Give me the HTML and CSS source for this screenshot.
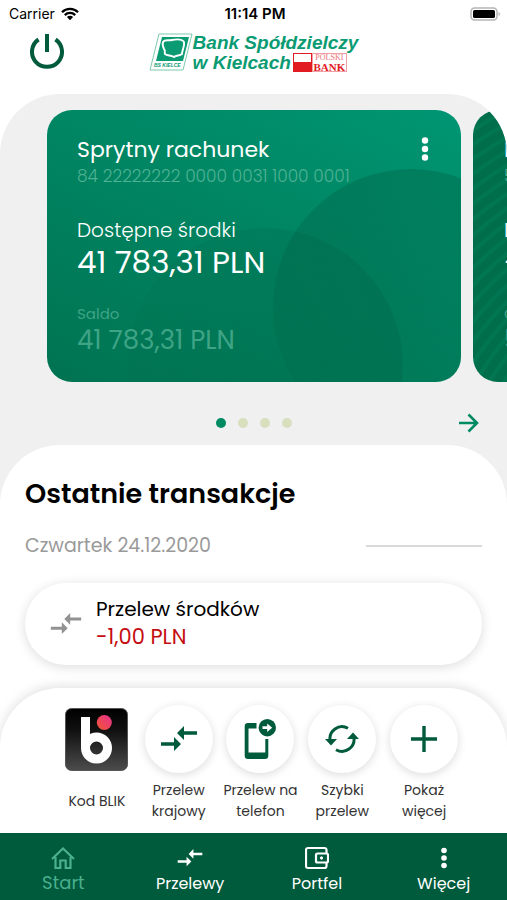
FILE: index.html
```html
<!DOCTYPE html>
<html lang="pl">
<head>
<meta charset="utf-8">
<meta name="viewport" content="width=device-width, initial-scale=1">
<title>Bank Spółdzielczy w Kielcach</title>
<link rel="stylesheet" href="styles.css">
</head>
<body>
<svg class="defs" aria-hidden="true">
  <symbol id="transfer" viewBox="0 0 38 26">
    <path d="M1 18h16M21 7h16" fill="none" stroke="currentColor" stroke-width="3.6"/>
    <path d="M14 11l7 7-7 7zM24 0l-7 7 7 7z" fill="currentColor"/>
  </symbol>
</svg>

<div class="status">
  <span class="carrier">Carrier
    <svg width="18" height="14" viewBox="0 0 18 14" aria-hidden="true">
      <path d="M1 5.2a11.4 11.4 0 0 1 16 0M3.8 8.1a7.4 7.4 0 0 1 10.4 0" fill="none" stroke="#000" stroke-width="2.3"/>
      <path d="M9 13.2L5.9 10.1a4.4 4.4 0 0 1 6.2 0z"/>
    </svg>
  </span>
  <span class="time">11:14 PM</span>
  <svg class="battery" width="31" height="14" viewBox="0 0 31 14" aria-hidden="true">
    <rect x="1" y="1" width="26" height="12" rx="3.5" fill="#fff" stroke="#b5b5b5" stroke-width="1.5"/>
    <rect x="3" y="3" width="22" height="8" rx="1.5"/>
    <path d="M28.5 5c2 .8 2 3.200 0 4z" fill="#b5b5b5"/>
  </svg>
</div>

<header class="header">
  <button class="power" aria-label="Wyloguj">
    <svg width="34" height="36" viewBox="0 0 34 36"><path d="M17 1v18M8.500 6.500a15 15 0 1 0 17 0" fill="none" stroke="currentColor" stroke-width="4"/></svg>
  </button>
  <div class="logo">
    <svg width="44" height="38" viewBox="0 0 44 38" aria-hidden="true">
      <path d="M10 1h33l-9 36H1z" fill="#fff" stroke="#7cc9b0"/>
      <path d="M13 4h27l-6 24H7z" fill="#0a9b73"/>
      <path d="M14 9c2-3 6-1 9-2 5-1 10-1 12 2 1 4-2 8-2 12-2 2-6 1-8 3-3-2-7-1-9-3-1-2 1-3-1-5-1-2-2-4-1-7z" fill="#0a9b73" stroke="#fff" stroke-width="1.900"/>
      <text x="5" y="34" class="logo-tag">BS KIELCE</text>
    </svg>
    <div class="logo-name">
      <div>Bank Spółdzielczy</div>
      <div class="logo-line"><span>w Kielcach</span>
        <span class="flag"></span><span class="polski"><span class="polski-top">POLSKI</span><span>BANK</span></span>
      </div>
    </div>
  </div>
</header>

<main class="main">
  <section class="accounts">
    <div class="carousel">
      <article class="card">
        <div class="card-head">
          <h2 class="card-title">Sprytny rachunek</h2>
          <button class="more" aria-label="Opcje rachunku">
            <svg width="8" height="24" viewBox="0 0 8 24" fill="currentColor"><circle cx="4" cy="3.500" r="3.200"/><circle cx="4" cy="12" r="3.200"/><circle cx="4" cy="20.500" r="3.200"/></svg>
          </button>
        </div>
        <p class="card-number">84 22222222 0000 0031 1000 0001</p>
        <p class="card-label">Dostępne środki</p>
        <p class="card-amount">41 783,31 PLN</p>
        <p class="card-sub">Saldo</p>
        <p class="card-balance">41 783,31 PLN</p>
      </article>
      <article class="card card-next">
        <div class="card-head"><h2 class="card-title">K</h2></div>
        <p class="card-number">5</p>
        <p class="card-label">D</p>
        <p class="card-amount">-</p>
        <p class="card-sub">C</p>
        <p class="card-balance">5</p>
      </article>
    </div>
    <div class="pager">
      <div class="dots"><span class="dot active"></span><span class="dot"></span><span class="dot"></span><span class="dot"></span></div>
      <button class="next" aria-label="Następny rachunek">
        <svg width="20" height="20" viewBox="0 0 20 20"><path d="M0 10h18M9.500 1.500L18 10l-8.500 8.500" fill="none" stroke="currentColor" stroke-width="2.600"/></svg>
      </button>
    </div>
  </section>

  <section class="sheet">
    <h1 class="sheet-title">Ostatnie transakcje</h1>
    <div class="day"><span>Czwartek 24.12.2020</span><span class="rule"></span></div>
    <a class="transaction" href="#">
      <svg class="transaction-icon" width="32" height="22" aria-hidden="true"><use href="#transfer"/></svg>
      <span class="transaction-text"><span>Przelew środków</span><span class="debit">-1,00 PLN</span></span>
    </a>
  </section>
</main>

<section class="quick">
  <button class="action">
    <span class="blik">
      <svg width="63" height="63" viewBox="0 0 63 63" aria-hidden="true">
        <defs>
          <linearGradient id="night" x1="0" y1="0" x2="0" y2="1"><stop offset="0" stop-color="#000"/><stop offset=".35" stop-color="#101010"/><stop offset="1" stop-color="#4c4c4c"/></linearGradient>
          <linearGradient id="glow" x1="1" y1="0" x2="0" y2="1"><stop offset="0" stop-color="#e5308f"/><stop offset="1" stop-color="#f2572f"/></linearGradient>
        </defs>
        <rect x=".5" y=".5" width="62" height="62" rx="6" fill="url(#night)" stroke="#555"/>
        <rect x="16" y="9" width="9" height="31" fill="#fff"/>
        <circle cx="31.500" cy="40" r="11" fill="none" stroke="#fff" stroke-width="9"/>
        <circle cx="39.300" cy="14.500" r="7.500" fill="url(#glow)"/>
      </svg>
    </span>
    <span class="action-label">Kod BLIK</span>
  </button>
  <button class="action">
    <span class="circle"><svg width="38" height="26" aria-hidden="true"><use href="#transfer"/></svg></span>
    <span class="action-label">Przelew<br>krajowy</span>
  </button>
  <button class="action">
    <span class="circle">
      <svg width="36" height="44" viewBox="0 0 36 44" aria-hidden="true">
        <path d="M14.500 6H6a3.300 3.300 0 0 0-3.300 3.300v29.400A3.300 3.300 0 0 0 6 42h17a3.300 3.300 0 0 0 3.300-3.300V22h-3v13.500H6.500v-24h8z" fill="currentColor"/>
        <circle cx="25.300" cy="10.700" r="8.700" fill="currentColor"/>
        <path d="M20.500 9.300h4.700V6.500l5 4.200-5 4.200v-2.800h-4.700z" fill="#fff"/>
      </svg>
    </span>
    <span class="action-label">Przelew na<br>telefon</span>
  </button>
  <button class="action">
    <span class="circle">
      <svg width="36" height="30" viewBox="-18 -15 36 30" aria-hidden="true">
        <path d="M6-10.700A12 12 0 0 0-11.800 2M-6 10.700A12 12 0 0 0 11.800-2" fill="none" stroke="currentColor" stroke-width="3"/>
        <path d="M-17 0h12l-6 6.500zM17 0H5l6-6.500z" fill="currentColor"/>
      </svg>
    </span>
    <span class="action-label">Szybki<br>przelew</span>
  </button>
  <button class="action">
    <span class="circle"><svg width="26" height="26" viewBox="0 0 26 26" aria-hidden="true"><path d="M13 0v26M0 13h26" stroke="currentColor" stroke-width="3.400"/></svg></span>
    <span class="action-label">Pokaż<br>więcej</span>
  </button>
</section>

<nav class="nav">
  <a class="tab current" href="#">
    <svg width="24" height="24" viewBox="0 0 24 24" aria-hidden="true"><path d="M1 13L12 2.500 23 13M4.500 11v11h4.800v-7.500h5.400V22h4.800V11" fill="none" stroke="currentColor" stroke-width="2.200"/></svg>
    <span>Start</span>
  </a>
  <a class="tab" href="#">
    <svg width="26" height="24" aria-hidden="true"><use href="#transfer"/></svg>
    <span>Przelewy</span>
  </a>
  <a class="tab" href="#">
    <svg width="24" height="24" viewBox="0 0 24 24" fill="none" stroke="currentColor" stroke-width="2.200" aria-hidden="true"><path d="M21.500 7.500V4a2 2 0 0 0-2-2H3a2 2 0 0 0-2 2v16a2 2 0 0 0 2 2h16.500a2 2 0 0 0 2-2v-3.500"/><rect x="11" y="7.500" width="12" height="9" rx="1.500"/><circle cx="16.500" cy="12" r="1.200" fill="currentColor" stroke-width="1"/></svg>
    <span>Portfel</span>
  </a>
  <a class="tab" href="#">
    <svg width="8" height="24" viewBox="0 0 8 24" fill="currentColor" aria-hidden="true"><circle cx="4" cy="4.500" r="2.800"/><circle cx="4" cy="12" r="2.800"/><circle cx="4" cy="19.500" r="2.800"/></svg>
    <span>Więcej</span>
  </a>
</nav>
</body>
</html>
```
FILE: styles.css
```css
* {
  box-sizing: border-box;
}

body {
  margin: 0;
  min-height: 100vh;
  display: flex;
  flex-direction: column;
  background: #fff;
  color: #000;
  font-family: Poppins, Inter, sans-serif;
}

h1, h2, p {
  margin: 0;
  font-weight: 400;
}

button {
  padding: 0;
  border: 0;
  background: none;
  color: inherit;
  font: inherit;
}

a {
  color: inherit;
  text-decoration: none;
}

svg {
  display: block;
}

.defs {
  position: absolute;
  width: 0;
  height: 0;
}

.status {
  display: grid;
  grid-template-columns: 1fr auto 1fr;
  align-items: center;
  height: 27px;
  padding: 0 6px 0 9px;
  font: 14px Inter, sans-serif;
}

.carrier {
  display: flex;
  align-items: center;
  gap: 6px;
}

.time {
  font-size: 15px;
  font-weight: 600;
}

.battery {
  justify-self: end;
}

.header {
  display: grid;
  grid-template-columns: 1fr auto 1fr;
  height: 67px;
  padding: 6px 30px 0;
}

.power {
  width: 34px;
  height: 36px;
  color: #005a3c;
}

.logo {
  display: flex;
  align-items: flex-start;
}

.logo-tag {
  fill: #0a9b73;
  font: italic bold 5px "Liberation Sans", sans-serif;
}

.logo-name {
  color: #0a9b73;
  font: italic bold 19px/20px "Liberation Sans", sans-serif;
}

.logo-line {
  display: flex;
  align-items: flex-start;
}

.flag {
  width: 19px;
  height: 19px;
  margin-left: 2px;
  border: 1px solid #e21b23;
  background: linear-gradient(#fff 50%, #e21b23 50%);
}

.polski {
  display: flex;
  flex-direction: column;
  align-items: center;
  width: 35px;
  height: 19px;
  border: 1px solid #f0a0a4;
  color: #e21b23;
  font: bold 11px/10px "Liberation Serif", serif;
}

.polski-top {
  font-weight: 400;
  font-size: 8px;
  line-height: 8px;
  color: #ea6f75;
}

.main {
  flex: 1;
  display: flex;
  flex-direction: column;
  overflow: hidden;
  border-radius: 60px 60px 0 0;
  background: #f0f0f0;
}

.carousel {
  display: flex;
  gap: 12px;
  padding: 16px 0 0 47px;
}

.card {
  position: relative;
  flex: 0 0 calc(100% - 46px);
  height: 272px;
  padding: 24px 30px;
  overflow: hidden;
  border-radius: 25px;
  background: linear-gradient(205deg, #009673 0%, #008562 45%, #007351 100%);
  color: #fff;
}

.card > * {
  position: relative;
  z-index: 1;
}

.card::before,
.card::after {
  content: "";
  position: absolute;
  z-index: 0;
  width: 276px;
  height: 276px;
  border-radius: 50%;
}

.card::before {
  top: 59px;
  right: -88px;
  background: linear-gradient(rgba(0, 80, 55, 0.28), rgba(0, 80, 55, 0.03));
}

.card::after {
  top: 118px;
  left: 80px;
  background: linear-gradient(75deg, rgba(0, 80, 55, 0.03), rgba(0, 80, 55, 0.2));
}

.card-next {
  padding: 24px 31px;
  background: repeating-radial-gradient(circle at 260px 420px, #006d4b 0 6px, #007751 8px 10px, #006d4b 12px);
}

.card-next::before,
.card-next::after {
  display: none;
}

.card-head {
  display: flex;
  justify-content: space-between;
  align-items: center;
  height: 30px;
}

.card-title {
  font-size: 22px;
}

.more {
  width: 8px;
  height: 24px;
  margin-right: 2px;
}

.card-number {
  font-size: 17px;
  font-weight: 300;
  line-height: 24px;
  color: #4fb294;
}

.card-label {
  margin-top: 28px;
  font-size: 20px;
  font-weight: 300;
  line-height: 28px;
}

.card-amount {
  font-size: 31px;
  line-height: 36px;
}

.card-sub {
  margin-top: 24px;
  font-size: 15px;
  line-height: 20px;
  color: #3fa486;
}

.card-balance {
  font-size: 26px;
  line-height: 32px;
  color: #3fa486;
}

.pager {
  display: grid;
  grid-template-columns: 1fr auto 1fr;
  align-items: center;
  height: 63px;
  padding: 18px 28px 0;
}

.dots {
  grid-column: 2;
  display: flex;
  gap: 12px;
}

.dot {
  width: 10px;
  height: 10px;
  border-radius: 50%;
  background: #d8dfbc;
}

.dot.active {
  background: #008a62;
}

.next {
  justify-self: end;
  color: #008a62;
}

.sheet {
  flex: 1;
  padding: 32px 25px 20px;
  border-radius: 60px 60px 0 0;
  background: #fff;
}

.sheet-title {
  font-size: 27px;
  font-weight: 600;
  line-height: 34px;
}

.day {
  display: flex;
  justify-content: space-between;
  align-items: center;
  margin-top: 22px;
  font-size: 19px;
  line-height: 26px;
  color: #9a9a9a;
}

.rule {
  width: 116px;
  height: 2px;
  background: #dadada;
}

.transaction {
  display: flex;
  align-items: center;
  gap: 14px;
  height: 82px;
  margin-top: 24px;
  padding: 0 25px;
  border-radius: 41px;
  background: #fff;
  box-shadow: 0 2px 12px rgba(0, 0, 0, 0.14);
  font-size: 20px;
  line-height: 28px;
}

.transaction-icon {
  color: #929292;
}

.transaction-text {
  display: flex;
  flex-direction: column;
  padding-bottom: 2px;
}

.debit {
  font-size: 21px;
  color: #c40d10;
}

.quick {
  position: relative;
  display: grid;
  grid-template-columns: repeat(5, 1fr);
  padding: 17px 42px 11px 56px;
  border-radius: 60px 60px 0 0;
  background: #fff;
  box-shadow: 0 -2px 12px rgba(0, 0, 0, 0.12);
}

.action {
  display: flex;
  flex-direction: column;
  align-items: center;
  color: #333;
  font-size: 14px;
  line-height: 21px;
  white-space: nowrap;
}

.circle,
.blik {
  display: grid;
  place-items: center;
  width: 68px;
  height: 68px;
  border-radius: 50%;
}

.circle {
  color: #005a3c;
  box-shadow: 0 2px 10px rgba(0, 0, 0, 0.14);
}

.action-label {
  display: grid;
  place-items: center;
  height: 42px;
  margin-top: 7px;
}

.nav {
  position: relative;
  display: grid;
  grid-template-columns: repeat(4, 1fr);
  height: 67px;
  background: #005a3c;
  color: #fff;
}

.tab {
  display: flex;
  flex-direction: column;
  align-items: center;
  padding-top: 13px;
  font-size: 16px;
  line-height: 28px;
}

.tab.current {
  font-size: 18px;
  line-height: 26px;
  color: #4ab08e;
}
```
